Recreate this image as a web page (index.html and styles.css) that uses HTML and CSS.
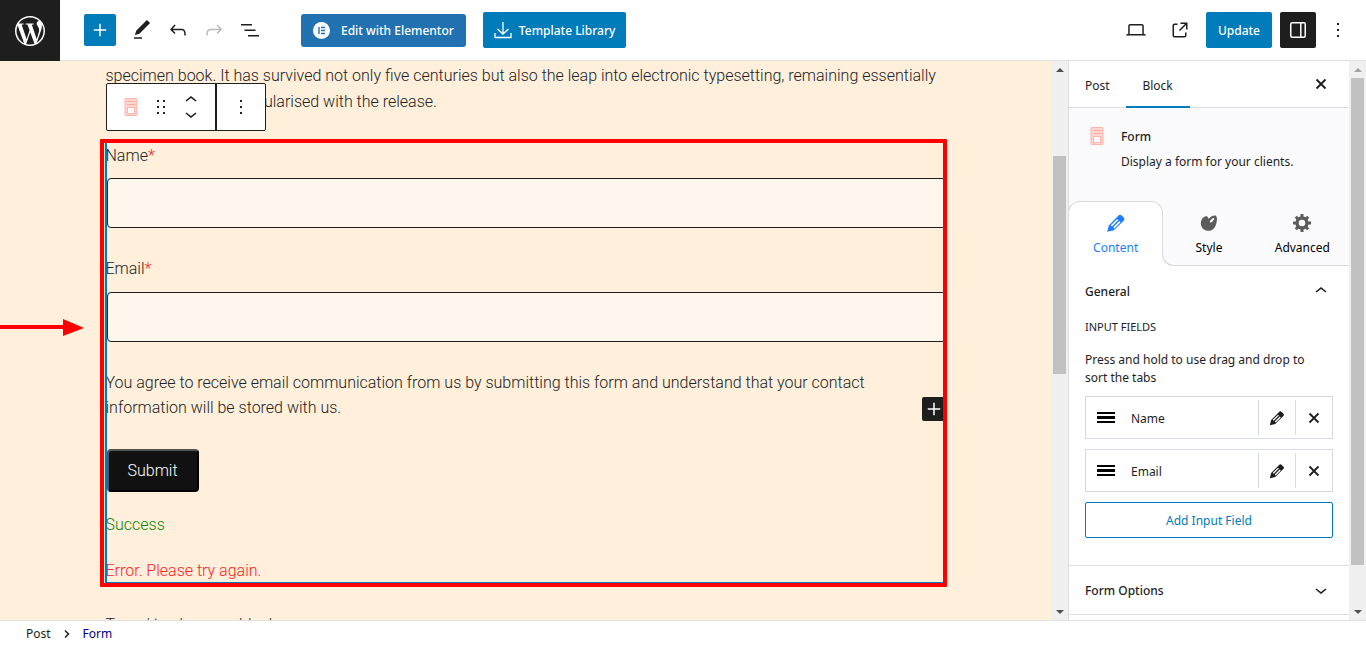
FILE: index.html
```
<!DOCTYPE html>
<html lang="en">
<head>
<meta charset="utf-8">
<meta name="viewport" content="width=device-width, initial-scale=1">
<title>Edit Post</title>
<link rel="stylesheet" href="styles.css">
</head>
<body>
<svg class="sprite" aria-hidden="true">
  <symbol id="form-block" viewBox="0 0 16 20"><rect x="2" y="1.500" width="12" height="17" rx="1" fill="#ffd5d0" stroke="#ffb3aa"/><path d="M4 4.500h8M4 7.500h8" stroke="#ffa99e"/><rect x="4.500" y="10.500" width="7" height="6" fill="#fff" stroke="#ffb3aa"/></symbol>
  <symbol id="dots" viewBox="0 0 24 24"><path d="M13 19h-2v-2h2v2zm0-6h-2v-2h2v2zm0-6h-2V5h2v2z"/></symbol>
  <symbol id="up" viewBox="0 0 24 24"><path d="M6.500 12.400 12 8l5.500 4.400-.9 1.200L12 10l-4.500 3.600-1-1.200z"/></symbol>
  <symbol id="down" viewBox="0 0 24 24"><path d="M17.500 11.600 12 16l-5.500-4.400.9-1.200L12 14l4.500-3.600 1 1.200z"/></symbol>
  <symbol id="plus" viewBox="0 0 24 24"><path d="M11.250 5.750h1.500v5.500h5.500v1.500h-5.500v5.500h-1.500v-5.500h-5.500v-1.500h5.500z"/></symbol>
  <symbol id="cross" viewBox="0 0 24 24"><path d="M7.500 7.500l9 9m0-9l-9 9" fill="none" stroke="currentColor" stroke-width="1.800"/></symbol>
  <symbol id="pencil" viewBox="0 0 20 20"><path d="M2 18 3.500 12.200 12.300 3.200Q13.700 1.700 15.200 3.200L17 5Q18.400 6.500 17 7.900L8 16.700z"/><path d="M5.800 12.600 11.600 6.800M8 14.400 13.600 8.800" stroke="#fff" stroke-width="1.500"/></symbol>
</svg>
<div class="editor">
  <header class="topbar">
    <a class="logo" href="#" aria-label="View posts"><svg width="30" height="30" viewBox="0 0 24 24"><path d="M21.469 6.825c.84 1.537 1.318 3.3 1.318 5.175 0 3.979-2.156 7.456-5.363 9.325l3.295-9.527c.615-1.54.82-2.771.82-3.864 0-.405-.026-.78-.07-1.11m-7.981.105c.647-.03 1.232-.105 1.232-.105.582-.075.514-.93-.067-.899 0 0-1.755.135-2.88.135-1.064 0-2.85-.15-2.85-.15-.585-.03-.661.855-.075.885 0 0 .54.061 1.125.09l1.68 4.605-2.37 7.08L5.354 6.9c.649-.03 1.234-.1 1.234-.1.585-.075.516-.93-.065-.896 0 0-1.746.138-2.874.138-.2 0-.438-.008-.69-.015C4.911 3.15 8.235 1.215 12 1.215c2.809 0 5.365 1.072 7.286 2.833-.046-.003-.091-.009-.141-.009-1.06 0-1.812.923-1.812 1.914 0 .89.513 1.643 1.06 2.531.411.72.89 1.643.89 2.977 0 .915-.354 1.994-.821 3.479l-1.075 3.585-3.9-11.61.001.014zM12 22.784c-1.059 0-2.081-.153-3.048-.437l3.237-9.406 3.315 9.087c.024.053.05.101.078.149-1.12.393-2.325.609-3.582.609M1.211 12c0-1.564.336-3.05.935-4.39L7.29 21.709C3.694 19.96 1.212 16.271 1.211 12M12 0C5.385 0 0 5.385 0 12s5.385 12 12 12 12-5.385 12-12S18.615 0 12 0"/></svg></a>
    <div class="tools">
      <button class="add" aria-label="Add block"><svg width="24" height="24"><use href="#plus"/></svg></button>
      <button class="icon" aria-label="Tools"><svg width="24" height="24" viewBox="0 0 24 24"><path d="M20.100 5.100 16.900 2 6.200 12.700l-1.300 4.400 4.500-1.300L20.100 5.100zM4 20.800h8v-1.500H4v1.500z"/></svg></button>
      <button class="icon" aria-label="Undo"><svg width="24" height="24" viewBox="0 0 24 24"><path d="M18.300 11.700c-.6-.6-1.400-.9-2.300-.9H6.700l2.900-3.300-1.100-1-4.500 5L8.500 16l1-1-2.700-2.700H16c.5 0 .9.200 1.300.5 1 1 1 3.400 1 4.500v.3h1.500v-.2c0-1.500 0-4.300-1.500-5.700z"/></svg></button>
      <button class="icon faded" aria-label="Redo"><svg width="24" height="24" viewBox="0 0 24 24"><path d="M15.600 6.500l-1.100 1 2.900 3.300H8c-.9 0-1.700.3-2.300.9-1.400 1.500-1.400 4.200-1.400 5.600v.2h1.500v-.3c0-1.100 0-3.500 1-4.500.3-.3.7-.5 1.300-.5h9.200L14.500 15l1.100 1.100 4.600-4.600-4.600-5z"/></svg></button>
      <button class="icon" aria-label="List view"><svg width="24" height="24" viewBox="0 0 24 24"><path d="M3 6h11v1.500H3V6zm3.500 5.500h11V13h-11v-1.500zM21 17H10v1.500h11V17z"/></svg></button>
    </div>
    <div class="plugins">
      <button class="elementor"><svg width="17" height="17" viewBox="0 0 17 17"><circle cx="8.500" cy="8.500" r="8.500"/><path d="M6 5v7M8 5.500h4M8 8.500h4M8 11.500h4" stroke="#2271b1" stroke-width="1.400"/></svg><span>Edit with Elementor</span></button>
      <button class="library"><svg width="18" height="18" viewBox="0 0 18 18"><path d="M9 1v12M3.500 8 9 13l5.500-5M1 12v4.500h16V12" fill="none" stroke="#fff" stroke-width="1.300"/></svg><span>Template Library</span></button>
    </div>
    <div class="actions">
      <button class="icon" aria-label="Preview"><svg width="24" height="24" viewBox="0 0 24 24"><path d="M20.500 16h-.7V8c0-1.100-.9-2-2-2H6.200c-1.100 0-2 .9-2 2v8h-.7c-.8 0-1.500.7-1.500 1.500h20c0-.8-.7-1.500-1.500-1.500zM5.700 8c0-.3.2-.5.5-.5h11.600c.3 0 .5.2.5.5v8H5.700V8z"/></svg></button>
      <button class="icon" aria-label="View post"><svg width="24" height="24" viewBox="0 0 24 24"><path d="M19.500 4.500h-7V6h4.440l-5.970 5.970 1.060 1.060L18 7.060v4.440h1.500v-7Zm-13 1a2 2 0 0 0-2 2v10a2 2 0 0 0 2 2h10a2 2 0 0 0 2-2v-3H17v3a.5.5 0 0 1-.5.5h-10a.5.5 0 0 1-.5-.5v-10a.5.5 0 0 1 .5-.5h3V5.500h-3Z"/></svg></button>
      <button class="update">Update</button>
      <button class="settings" aria-label="Settings"><svg width="24" height="24" viewBox="0 0 24 24"><rect x="4.750" y="4.750" width="14.500" height="14.500" rx="1.500" fill="none" stroke="#fff" stroke-width="1.500"/><path d="M14.800 5v14" stroke="#fff" stroke-width="1.500"/></svg></button>
      <button class="more" aria-label="Options"><svg width="24" height="24"><use href="#dots"/></svg></button>
    </div>
  </header>

  <div class="body">
    <main class="canvas">
      <article class="post">
        <p class="copy">specimen book. It has survived not only five centuries but also the leap into electronic typesetting, remaining essentially unchanged. It was popularised with the release.</p>
        <form class="form">
          <div class="field"><label for="name">Name<span class="req">*</span></label><input id="name" type="text"></div>
          <div class="field"><label for="email">Email<span class="req">*</span></label><input id="email" type="email"></div>
          <p class="consent">You agree to receive email communication from us by submitting this form and understand that your contact information will be stored with us.</p>
          <button class="submit" type="button">Submit</button>
          <p class="success">Success</p>
          <p class="error">Error. Please try again.</p>
          <button class="inserter" type="button" aria-label="Add block"><svg width="24" height="24"><use href="#plus"/></svg></button>
          <div class="highlight"></div>
          <div class="toolbar">
            <div class="toolgroup">
              <button class="block-type" type="button" aria-label="Form"><svg width="16" height="20"><use href="#form-block"/></svg></button>
              <button type="button" aria-label="Drag"><svg width="24" height="24" viewBox="0 0 24 24"><path d="M8 7h2V5H8v2zm0 6h2v-2H8v2zm0 6h2v-2H8v2zm6-14v2h2V5h-2zm0 8h2v-2h-2v2zm0 6h2v-2h-2v2z"/></svg></button>
              <div class="movers">
                <button type="button" aria-label="Move up"><svg width="24" height="24"><use href="#up"/></svg></button>
                <button type="button" aria-label="Move down"><svg width="24" height="24"><use href="#down"/></svg></button>
              </div>
            </div>
            <button class="toolmore" type="button" aria-label="Options"><svg width="24" height="24"><use href="#dots"/></svg></button>
          </div>
        </form>
        <p class="prompt">Type / to choose a block</p>
      </article>
      <svg class="pointer" width="84" height="18" viewBox="0 0 84 18"><path d="M0 6h63V0l21 9-21 8v-7H0z" fill="#f00"/></svg>
    </main>
    <div class="scroll canvas-scroll" aria-hidden="true"><i class="arrow-up"></i><div class="track"><span class="before"></span><span class="thumb"></span><span class="after"></span></div><i class="arrow-down"></i></div>

    <aside class="sidebar">
      <div class="tabs">
        <button class="tab">Post</button>
        <button class="tab active">Block</button>
        <button class="close" aria-label="Close settings"><svg width="24" height="24"><use href="#cross"/></svg></button>
      </div>
      <section class="card">
        <svg width="16" height="20"><use href="#form-block"/></svg>
        <div><h2>Form</h2><p>Display a form for your clients.</p></div>
      </section>
      <nav class="modes">
        <button class="mode current"><svg width="22" height="22"><use href="#pencil"/></svg>Content</button>
        <button class="mode style"><svg width="22" height="22" viewBox="0 0 22 22"><path d="M7 4.500C8.500 3.800 9.500 4.200 9.800 5.500 10 6.800 11 6.800 12 5.500 14 3.500 16.500 3 18 3.800 19.500 5.500 19 9 18.300 11.500 17 16.500 14 19 10.500 18.800 6 18.800 2.800 15.500 2.800 11.500 2.800 8 4.500 5.500 7 4.500z"/><path d="M12.800 9.500 15.300 7" stroke="#fbfbfd" stroke-width="2" stroke-linecap="round"/></svg>Style</button>
        <button class="mode"><svg width="22" height="22" viewBox="0 0 22 22"><circle cx="11" cy="11" r="5" fill="none" stroke="currentColor" stroke-width="3.400"/><path d="M11 2v4M11 16v4M2 11h4M16 11h4M4.800 4.800l2.500 2.500M14.700 14.700l2.500 2.500M17.200 4.800l-2.500 2.500M7.300 14.700l-2.500 2.500" stroke="currentColor" stroke-width="3"/></svg>Advanced</button>
      </nav>
      <section class="general">
        <button class="heading"><span>General</span><svg width="24" height="24"><use href="#up"/></svg></button>
        <h3>INPUT FIELDS</h3>
        <p>Press and hold to use drag and drop to sort the tabs</p>
        <div class="item"><span class="bars"></span><span class="item-name">Name</span><button aria-label="Edit Name"><svg width="18" height="18"><use href="#pencil"/></svg></button><button aria-label="Remove Name"><svg width="24" height="24"><use href="#cross"/></svg></button></div>
        <div class="item"><span class="bars"></span><span class="item-name">Email</span><button aria-label="Edit Email"><svg width="18" height="18"><use href="#pencil"/></svg></button><button aria-label="Remove Email"><svg width="24" height="24"><use href="#cross"/></svg></button></div>
        <button class="add-field">Add Input Field</button>
      </section>
      <section class="options"><button class="heading"><span>Form Options</span><svg width="24" height="24"><use href="#down"/></svg></button></section>
    </aside>
    <div class="scroll side-scroll" aria-hidden="true"><i class="arrow-up"></i><div class="track"><span class="thumb"></span><span class="after"></span></div><i class="arrow-down"></i></div>
  </div>
  <footer class="crumbs"><a href="#">Post</a><svg width="6" height="8" viewBox="0 0 6 8"><path d="M1 0.500 4.500 4 1 7.500" fill="none" stroke="#1e1e1e" stroke-width="1.500"/></svg><a class="here" href="#">Form</a></footer>
</div>
</body>
</html>
```

FILE: styles.css
```
* { box-sizing: border-box; }
body { margin: 0; background: #fff; color: #1e1e1e; font: 12px/18px "Noto Sans", "Open Sans", sans-serif; }
button { margin: 0; padding: 0; border: 0; background: none; color: inherit; font: inherit; cursor: pointer; display: flex; align-items: center; justify-content: center; }
svg { fill: currentColor; flex: none; display: block; }
p, h2, h3 { margin: 0; font-size: inherit; font-weight: inherit; }
a { color: inherit; text-decoration: none; }
.sprite { position: absolute; width: 0; height: 0; }
.editor { height: 100vh; display: flex; flex-direction: column; overflow: hidden; }

.topbar { display: flex; align-items: center; height: 61px; flex: none; border-bottom: 1px solid #e0e0e0; padding-right: 16px; }
.logo { width: 60px; height: 61px; margin-bottom: -1px; background: #1e1e1e; color: #fff; display: flex; align-items: center; justify-content: center; }
.tools { display: flex; align-items: center; gap: 12px; margin-left: 24px; }
.add { width: 32px; height: 32px; background: #007cba; color: #fff; border-radius: 2px; }
.tools .icon { width: 24px; height: 32px; }
.tools .add { margin-right: 2px; }
.faded { color: #bbb; }
.plugins { display: flex; align-items: center; gap: 17px; margin-left: 39px; }
.plugins button { color: #fff; font-weight: 500; }
.plugins span { padding-top: 1px; }
.elementor { background: #2271b1; border-radius: 3px; height: 33px; padding: 0 12px; gap: 11px; }
.library { background: #007cba; border-radius: 2px; height: 36px; padding: 0 11px; gap: 7px; }
.actions { display: flex; align-items: center; margin-left: auto; gap: 8px; }
.actions .icon { width: 36px; height: 36px; }
.update { height: 36px; padding: 2px 12px 0; background: #007cba; color: #fff; border-radius: 2px; font-weight: 500; }
.settings { width: 36px; height: 36px; background: #1e1e1e; border-radius: 2px; }
.more { width: 24px; height: 36px; margin-left: 2px; }

.body { display: flex; flex: 1; min-height: 0; }
.canvas { flex: 1; min-width: 0; position: relative; overflow: hidden; background: #ffefdb; color: #222; font: 300 16px/26px Roboto, sans-serif; }
.post { max-width: 840px; margin: 0 auto; padding-top: 2px; }
.form { position: relative; margin-top: 28px; }
.form::before { content: ""; position: absolute; inset: -1px 0 1px -1px; border: 1px solid #007cba; border-left-width: 2px; pointer-events: none; }
.field { display: flex; flex-direction: column; gap: 9px; margin-bottom: 28px; }
.field + .field { gap: 10px; }
.field input { height: 50px; margin-left: 1px; border: 1px solid #1e1e1e; border-radius: 4px; background: #fff7ed; padding: 0 12px; font: inherit; position: relative; }
.req, .error { color: #f22; }
.consent { line-height: 25px; }
.submit { margin: 29px 0 20px 1px; height: 43px; padding: 0 19px; background: #111; color: #fff; border: 2px outset #000; border-radius: 4px; position: relative; }
.success { color: #0a8500; margin-bottom: 20px; }
.prompt { margin-top: 28px; }
.inserter { position: absolute; right: 0; top: 254px; width: 24px; height: 24px; background: #1e1e1e; color: #fff; border-radius: 2px; }
.highlight { position: absolute; inset: -4px -1px -3px -6px; border: 4px solid #f00; border-radius: 1px; pointer-events: none; }
.pointer { position: absolute; left: 0; top: 258px; }
.toolbar { position: absolute; left: 0; top: -60px; height: 48px; display: flex; background: #fff; color: #1e1e1e; border: 1px solid #1e1e1e; border-radius: 2px; }
.toolgroup { display: flex; align-items: center; width: 110px; padding-left: 16px; gap: 6px; border-right: 2px solid #1e1e1e; }
.block-type { margin-right: 4px; }
.movers { display: flex; flex-direction: column; justify-content: center; }
.movers button { height: 14px; }
.toolmore { width: 48px; }

.scroll { width: 17px; flex: none; background: #f0f0f0; display: flex; flex-direction: column; align-items: center; }
.scroll i { height: 17px; display: flex; align-items: center; }
.scroll i::before { content: ""; border: 4px solid transparent; }
.scroll .arrow-up::before { border-top-width: 0; border-bottom-color: #505050; }
.scroll .arrow-down::before { border-bottom-width: 0; border-top-color: #505050; }
.side-scroll .arrow-up::before { border-bottom-color: #a3a3a3; }
.track { flex: 1; width: 13px; display: flex; flex-direction: column; }
.thumb { background: #c1c1c1; }
.canvas-scroll .before { flex: 78; }
.canvas-scroll .thumb { flex: 218; }
.canvas-scroll .after { flex: 229; }
.side-scroll .thumb { flex: 487; }
.side-scroll .after { flex: 38; }

.sidebar { width: 281px; flex: none; border-left: 1px solid #ddd; overflow: hidden; background: #fff; }
.tabs { display: flex; height: 47px; border-bottom: 1px solid #ddd; }
.tab { height: 47px; padding: 2px 16px 0; }
.tab.active { min-width: 64px; box-shadow: inset 0 -2px #007cba; }
.close { width: 24px; margin-left: auto; margin-right: 16px; }
.card { display: flex; gap: 16px; padding: 20px 16px 30px 20px; background: #fbfbfd; }
.card svg { margin-top: -2px; }
.card h2 { font-weight: 500; margin-bottom: 7px; }
.modes { display: grid; grid-template-columns: 1fr 1fr 1fr; background: linear-gradient(90deg, #fff 50%, #fbfbfd 50%); }
.mode { height: 65px; flex-direction: column; gap: 5px; padding-top: 2px; color: #000; border-bottom: 1px solid #d5dadf; background: #fbfbfd; }
.mode svg { color: #5c5c5c; }
.mode.current { height: 53px; margin: 0 -1px 12px; padding-top: 12px; color: #1d7dff; background: #fff; border: 1px solid #d5dadf; border-bottom: 0; border-radius: 12px 12px 0 0; box-shadow: 0 -12px #fbfbfd; position: relative; z-index: 1; }
.mode.current svg { color: #1d7dff; }
.style { position: relative; border-bottom-left-radius: 12px; }
.style::before { content: ""; position: absolute; left: 0; bottom: -1px; width: 12px; height: 13px; border: solid #d5dadf; border-width: 0 0 1px 1px; border-bottom-left-radius: 12px; }
.general { padding: 13px 16px 27px; }
.heading { width: 100%; height: 24px; justify-content: space-between; font-weight: 500; }
.heading span, .item-name, .add-field { padding-top: 2px; }
.general h3 { font-size: 11px; line-height: 16px; margin: 16px 0 16px; }
.general p { margin-bottom: 9px; padding-right: 16px; }
.item { display: flex; align-items: center; height: 43px; border: 1px solid #d5dadf; margin-bottom: 10px; padding-left: 11px; }
.bars { width: 18px; height: 11px; border: solid #000; border-width: 2px 0; display: flex; align-items: center; }
.bars::before { content: ""; width: 18px; height: 3px; background: #000; }
.item-name { flex: 1; margin-left: 16px; }
.item button { width: 37px; height: 35px; border-left: 1px solid #d5dadf; }
.add-field { width: 100%; height: 36px; border: 1px solid #007cba; border-radius: 2px; color: #007cba; }
.options { border: solid #e0e0e0; border-width: 1px 0; padding: 12px 16px; }
.options .heading { height: 24px; }

.crumbs { height: 25px; flex: none; border-top: 1px solid #e0e0e0; display: flex; align-items: center; gap: 13px; padding: 1px 26px 0; }
.here { color: #00007c; }
```
